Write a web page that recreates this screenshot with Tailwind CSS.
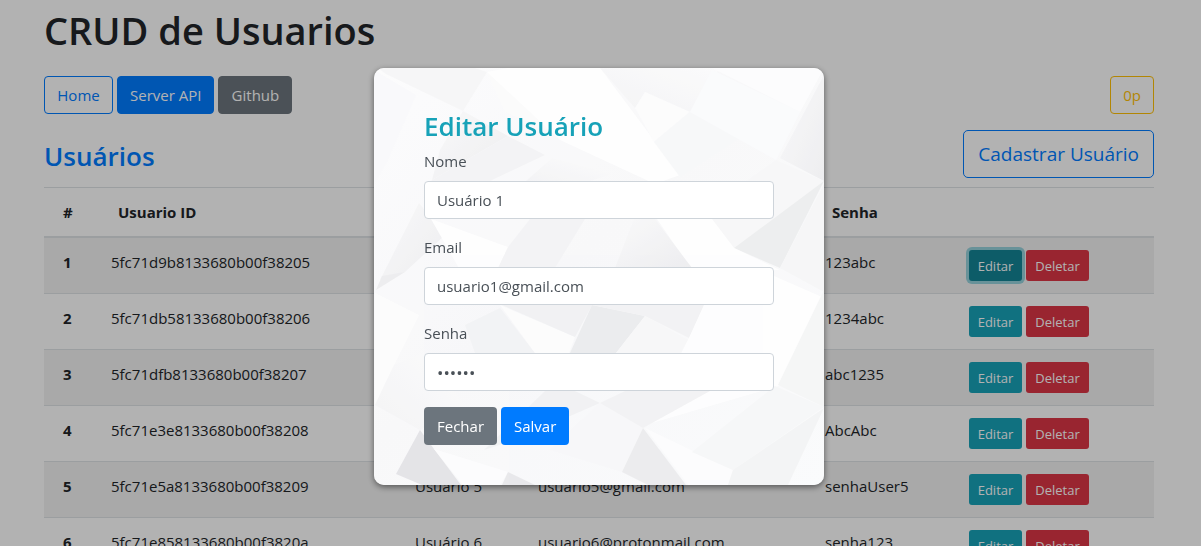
<!DOCTYPE html>
<html lang="pt-BR">
<head>
<meta charset="utf-8">
<meta name="viewport" content="width=device-width, initial-scale=1">
<title>CRUD de Usuarios</title>
<script src="https://cdn.jsdelivr.net/npm/@tailwindcss/browser@4"></script>
</head>
<body class="h-screen overflow-hidden bg-white font-['Open_Sans','Noto_Sans',sans-serif] text-[15px] leading-6 text-[#212529]">
<div class="mx-auto w-full max-w-[1143px] pl-[15px] pr-[18px] pt-1.5">
  <h1 class="text-[38px] leading-[48px] font-semibold">CRUD de Usuarios</h1>
  <nav class="mt-[22px] flex gap-1 text-center">
    <a href="#" class="min-w-[69px] rounded border border-[#007bff] px-3 py-[6px] text-[#007bff]">Home</a>
    <a href="#" class="rounded border border-[#007bff] bg-[#007bff] px-3 py-[6px] text-white">Server API</a>
    <a href="#" class="min-w-[74px] rounded border border-[#6c757d] bg-[#6c757d] px-3 py-[6px] text-white">Github</a>
    <button type="button" class="ml-auto rounded border border-[#ffc107] px-3 py-[6px] text-[#ffc107]">0p</button>
  </nav>
  <div class="mt-4 flex items-center justify-between">
    <h2 class="mt-1 text-[26px] leading-8 font-semibold text-[#007bff]">Usuários</h2>
    <button type="button" class="h-12 rounded-[5px] border border-[#007bff] px-[14px] text-[19px] text-[#007bff]">Cadastrar Usuário</button>
  </div>
  <table class="mt-[9px] w-full table-fixed border-separate border-spacing-0 text-left">
    <colgroup><col class="w-[55px]"><col class="w-[304px]"><col class="w-[123px]"><col class="w-[287px]"><col class="w-[144px]"><col></colgroup>
    <thead>
      <tr class="*:h-[51px] *:border-t *:border-b-2 *:border-[#dee2e6] *:pl-[19px] *:font-bold">
        <th scope="col">#</th><th scope="col">Usuario ID</th><th scope="col">Nome</th><th scope="col">Email</th><th scope="col">Senha</th><td></td>
      </tr>
    </thead>
    <tbody id="rows"></tbody>
  </table>
</div>

<template id="row">
  <tr class="odd:bg-black/5 *:h-14 *:border-t *:border-[#dee2e6] *:pt-3 *:pl-3 *:align-top first:*:h-[55px] first:*:border-t-0">
    <th scope="row" class="font-bold"><span class="pl-[7px]"></span></th>
    <td></td><td></td><td></td><td></td>
    <td><div class="flex gap-1">
      <button type="button" class="h-[31px] w-[53px] rounded-[3px] bg-[#17a2b8] text-[13px] text-white">Editar</button>
      <button type="button" class="h-[31px] w-[63px] rounded-[3px] bg-[#dc3545] text-[13px] text-white">Deletar</button>
    </div></td>
  </tr>
</template>

<div class="fixed inset-0 flex items-start justify-center bg-black/30 pt-[68px] pr-[3px]">
  <div role="dialog" aria-labelledby="dialog-title" class="relative w-full max-w-[450px] overflow-hidden rounded-[10px] bg-[#fafafb] px-[50px] py-10 shadow-[0_2px_6px_rgba(0,0,0,0.5)]">
    <svg class="absolute inset-0 size-full opacity-75" viewBox="374 68 450 417" preserveAspectRatio="none" aria-hidden="true">
      <defs>
        <linearGradient id="base" x1="0" y1="0" x2="1" y2="1"><stop offset="0" stop-color="#fcfcfd"/><stop offset=".45" stop-color="#f7f7f9"/><stop offset="1" stop-color="#fafbfc"/></linearGradient>
        <linearGradient id="fade" x1="0" y1="0" x2="1" y2="1"><stop offset="0" stop-color="#f8f8f9"/><stop offset="1" stop-color="#e9e9ec"/></linearGradient>
        <linearGradient id="soft" x1="1" y1="0" x2="0" y2="1"><stop offset="0" stop-color="#fbfbfc"/><stop offset="1" stop-color="#f1f1f3"/></linearGradient>
      </defs>
      <path fill="url(#base)" d="M374 68h450v417H374z"/>
      <path fill="#f5f5f6" d="M378 68H475L487 72 463 111 386 74z"/>
      <path fill="#fbfbfb" d="M487 72 610 68 585 145 505 112z"/>
      <path fill="#fff" d="M508 68H600L680 175 655 184 560 140 487 72z"/>
      <path fill="#f9f9fb" d="M374 70 416 95 388 160 374 185z"/>
      <path fill="url(#fade)" d="M463 111 508 136 432 180 440 150z"/>
      <path fill="#f1f1f3" d="M508 136 432 180 424 190 490 181 545 155z"/>
      <path fill="url(#soft)" d="M552 158 526 181H590L612 174z"/>
      <path fill="url(#soft)" d="M600 68H720L690 112 645 92 635 108z"/>
      <path fill="#fcfcfd" d="M645 92 690 112 654 142 635 108z"/>
      <path fill="#f6f7f9" d="M690 112 740 138 680 177 654 142z"/>
      <path fill="#fafbfd" d="M712 70 800 112 776 160 690 112z"/>
      <path fill="#fdfdfe" d="M712 68H824L800 112z"/>
      <path fill="url(#fade)" d="M824 75 780 158 824 181z"/>
      <path fill="#f6f6f7" d="M776 160 824 181 734 248 712 219 745 182z"/>
      <path fill="#e9eaeb" d="M824 181 734 248 780 268z"/>
      <path fill="#f4f5f6" d="M824 184 780 268 824 292z"/>
      <path fill="#fff" d="M657 219H712L734 248 780 270H692z"/>
      <path fill="url(#fade)" d="M634 219H655L692 268H615z"/>
      <path fill="url(#fade)" d="M419 203 445 235 405 272 380 280z"/>
      <path fill="#fff" d="M431 219 508 247 498 270H460z"/>
      <path fill="#f1f1f3" d="M530 219H585L555 268H498L508 247z"/>
      <path fill="#e9e9eb" d="M382 276 405 272 376 290z"/>
      <path fill="#fdfdfd" d="M375 293 419 315 394 365 375 405z"/>
      <path fill="#f0f1f3" d="M465 325 500 308 535 353H475z"/>
      <path fill="#fdfdfd" d="M500 305 575 337 569 353H535z"/>
      <path fill="#eeeff1" d="M502 305H592L575 337z"/>
      <path fill="#e7e8ea" d="M592 305 645 316 616 353H570z"/>
      <path fill="#f0f0f2" d="M592 305H704L689 338 645 316z"/>
      <path fill="#f7f7f8" d="M645 316 688 340 680 353H616z"/>
      <path fill="#fff" d="M704 305 774 276 822 297 782 385 645 425 689 338z"/>
      <path fill="#f3f4f5" d="M824 290 778 385 824 407z"/>
      <path fill="url(#soft)" d="M394 365 424 353 465 405 420 430 375 405z"/>
      <path fill="#eeeff1" d="M545 391 484 450 515 440 600 403 575 391z"/>
      <path fill="#f7f7f9" d="M600 403 643 428 622 472 550 450z"/>
      <path fill="#f0f0f2" d="M600 403 643 428 710 391H625z"/>
      <path fill="#dddce1" d="M420 430 396 474 422 485H461L434 449z"/>
      <path fill="#fdfdfe" d="M434 449 508 472 500 485H463z"/>
      <path fill="#e3e3e6" d="M508 472 535 485H502z"/>
      <path fill="#e8e8ea" d="M643 428 622 472 648 485H686z"/>
      <path fill="#fdfdfe" d="M645 428 733 470 728 485H688z"/>
      <path fill="#f5f6f7" d="M692 452 733 470 824 407 775 386z"/>
      <path fill="#f1f2f3" d="M733 470 824 408 788 485H728z"/>
    </svg>
    <form class="relative text-[#495057]">
      <h2 id="dialog-title" class="mb-1.5 pt-0.5 text-[26px] leading-[33px] font-semibold text-[#17a2b8]">Editar Usuário</h2>
      <label for="nome" class="mb-2 block">Nome</label>
      <input id="nome" type="text" value="Usuário 1" class="mb-4 block h-[38px] w-full rounded border border-[#ced4da] bg-white px-3">
      <label for="email" class="mb-2 block">Email</label>
      <input id="email" type="email" value="usuario1@gmail.com" class="mb-4 block h-[38px] w-full rounded border border-[#ced4da] bg-white px-3">
      <label for="senha" class="mb-2 block">Senha</label>
      <input id="senha" type="password" value="abcdef" class="mb-4 block h-[38px] w-full rounded border border-[#ced4da] bg-white px-3 text-[17px]">
      <div class="flex gap-1 text-white">
        <button type="button" class="h-[38px] rounded bg-[#6c757d] px-[13px]">Fechar</button>
        <button type="submit" class="h-[38px] rounded bg-[#007bff] px-[13px]">Salvar</button>
      </div>
    </form>
  </div>
</div>
<script>
const users = [
  ['5fc71d9b8133680b00f38205', 'Usuário 1', 'usuario1@gmail.com', '123abc'],
  ['5fc71db58133680b00f38206', 'Usuário 2', 'usuario2@gmail.com', '1234abc'],
  ['5fc71dfb8133680b00f38207', 'Usuário 3', 'usuario3@gmail.com', 'abc1235'],
  ['5fc71e3e8133680b00f38208', 'Usuário 4', 'usuario4@gmail.com', 'AbcAbc'],
  ['5fc71e5a8133680b00f38209', 'Usuário 5', 'usuario5@gmail.com', 'senhaUser5'],
  ['5fc71e858133680b00f3820a', 'Usuário 6', 'usuario6@protonmail.com', 'senha123'],
];
const body = document.getElementById('rows');
users.forEach((user, i) => {
  const row = document.getElementById('row').content.cloneNode(true);
  row.querySelector('span').textContent = i + 1;
  const cells = row.querySelectorAll('td');
  user.forEach((value, c) => { cells[c].textContent = value; });
  if (i === 0) {
    const edit = row.querySelector('button');
    edit.classList.replace('bg-[#17a2b8]', 'bg-[#138496]');
    edit.classList.add('ring-3', 'ring-[#3ab0c3]/50');
  }
  body.append(row);
});
</script>
</body>
</html>
